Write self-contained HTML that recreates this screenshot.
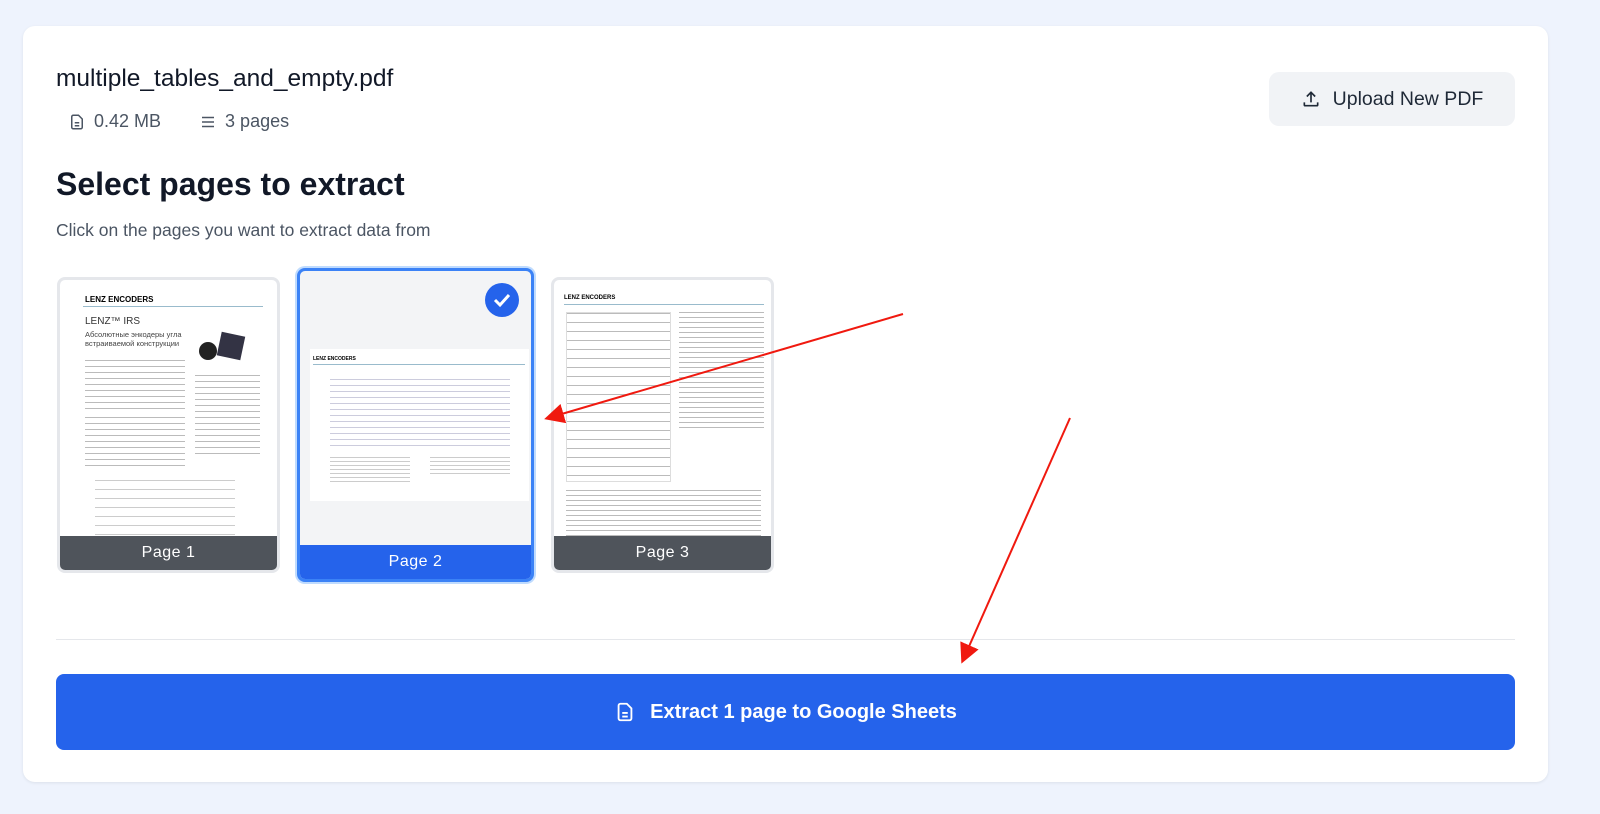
<!DOCTYPE html>
<html><head><meta charset="utf-8"><style>
*{box-sizing:border-box;margin:0;padding:0}
body{width:1600px;height:814px;background:#eef3fd;font-family:"Liberation Sans","Noto Sans CJK SC",sans-serif;position:relative;overflow:hidden}
.card{position:absolute;left:23px;top:26px;width:1525px;height:756px;background:#fff;border-radius:12px;box-shadow:0 1px 3px rgba(0,0,0,.08)}
.abs{position:absolute}
.t{position:absolute;background:#fff;border-radius:8px;overflow:hidden}
.line{position:absolute;height:2px;background:#c9ccd2}
.lbl{position:absolute;left:0;right:0;bottom:0;height:34px;color:#fff;font-size:16px;display:flex;align-items:center;justify-content:center;letter-spacing:.5px}
</style></head><body>
<div class="card">
 <div class="abs" style="left:33px;top:39px;font-size:24.5px;color:#111827">multiple_tables_and_empty.pdf</div>
 <div class="abs" style="left:45px;top:85px;font-size:18px;color:#4b5563;display:flex;align-items:center;gap:8px">
  <svg width="18" height="18" viewBox="0 0 24 24" fill="none" stroke="#4b5563" stroke-width="2"><path d="M14 3H7a2 2 0 0 0-2 2v14a2 2 0 0 0 2 2h10a2 2 0 0 0 2-2V8z"/><path d="M9 13h6M9 17h6"/></svg>0.42 MB
  <svg style="margin-left:30px" width="18" height="18" viewBox="0 0 24 24" fill="none" stroke="#4b5563" stroke-width="2"><path d="M4 6h16M4 12h16M4 18h16"/></svg>3 pages</div>
 <div class="abs" style="left:1246px;top:46px;width:246px;height:54px;background:#f1f3f6;border-radius:10px;display:flex;align-items:center;justify-content:center;gap:12px;font-size:19.5px;color:#1f2937">
  <svg width="20" height="20" viewBox="0 0 24 24" fill="none" stroke="#1f2937" stroke-width="2"><path d="M4 16v3a1 1 0 0 0 1 1h14a1 1 0 0 0 1-1v-3M12 4v12M7 9l5-5 5 5"/></svg>Upload New PDF</div>
 <div class="abs" style="left:33px;top:140px;font-size:32px;font-weight:bold;color:#111827">Select pages to extract</div>
 <div class="abs" style="left:33px;top:194px;font-size:17.5px;color:#4b5563">Click on the pages you want to extract data from</div>

 <!-- page1 -->
 <div class="t" style="left:34px;top:251px;width:223px;height:296px;border:3px solid #e5e7eb">
  <div class="abs" style="left:12px;top:4px;width:196px;height:290px;background:#fff">
   <div class="abs" style="left:13px;top:11px;font-size:8px;font-weight:bold">LENZ ENCODERS</div>
   <div class="abs" style="left:11px;top:22px;width:180px;height:1px;background:#9bc"></div>
   <div class="abs" style="left:13px;top:32px;font-size:10px;color:#333">LENZ™ IRS</div>
   <div class="abs" style="left:13px;top:46px;font-size:7.5px;color:#444;width:100px">Абсолютные энкодеры угла встраиваемой конструкции</div>
   <div class="abs" style="left:127px;top:48px;width:45px;height:32px;"><div class="abs" style="left:0;top:10px;width:18px;height:18px;border-radius:50%;background:#222"></div><div class="abs" style="left:20px;top:2px;width:24px;height:24px;background:#334;transform:rotate(12deg)"></div></div>
  </div>
  <div class="line" style="left:25px;top:80px;width:100px;height:50px;background:repeating-linear-gradient(#bbb 0 1px,#fff 1px 6px)"></div>
  <div class="line" style="left:25px;top:137px;width:100px;height:50px;background:repeating-linear-gradient(#bbb 0 1px,#fff 1px 6px)"></div>
  <div class="line" style="left:135px;top:95px;width:65px;height:80px;background:repeating-linear-gradient(#bbb 0 1px,#fff 1px 6px)"></div>
  <div class="line" style="left:35px;top:200px;width:140px;height:60px;background:repeating-linear-gradient(#ccc 0 1px,#fff 1px 9px)"></div>
  <div class="lbl" style="background:rgba(55,60,68,.88)">Page 1</div>
 </div>
 <!-- page2 -->
 <div class="t" style="left:274px;top:242px;width:237px;height:314px;border:3px solid #3b82f6;box-shadow:0 0 0 2px #bfdbfe;background:#f3f4f6">
  <div class="abs" style="left:10px;top:78px;width:219px;height:152px;background:#fff">
   <div class="abs" style="left:3px;top:7px;font-size:5px;font-weight:bold">LENZ ENCODERS</div>
   <div class="abs" style="left:3px;top:15px;width:212px;height:1px;background:#9bc"></div>
   <div class="abs" style="left:20px;top:30px;width:180px;height:70px;background:repeating-linear-gradient(#ccd 0 1px,#fff 1px 6px)"></div>
   <div class="abs" style="left:20px;top:108px;width:80px;height:25px;background:repeating-linear-gradient(#ccc 0 1px,#fff 1px 4px)"></div>
   <div class="abs" style="left:120px;top:108px;width:80px;height:20px;background:repeating-linear-gradient(#ccc 0 1px,#fff 1px 4px)"></div>
  </div>
  <div class="abs" style="right:12px;top:12px;width:34px;height:34px;border-radius:50%;background:#2563eb"><svg width="34" height="34" viewBox="0 0 34 34"><path d="M10 17l5 5 9-10" fill="none" stroke="#fff" stroke-width="3"/></svg></div>
  <div class="lbl" style="background:#2563eb">Page 2</div>
 </div>
 <!-- page3 -->
 <div class="t" style="left:528px;top:251px;width:223px;height:296px;border:3px solid #e5e7eb">
  <div class="abs" style="left:10px;top:15px;font-size:6px;font-weight:bold">LENZ ENCODERS</div>
  <div class="abs" style="left:10px;top:24px;width:200px;height:1px;background:#9bc"></div>
  <div class="abs" style="left:12px;top:32px;width:105px;height:170px;background:repeating-linear-gradient(#bbb 0 1px,#fff 1px 9px);border:1px solid #ddd"></div>
  <div class="abs" style="left:125px;top:32px;width:85px;height:120px;background:repeating-linear-gradient(#bbb 0 1px,#fff 1px 5px)"></div>
  <div class="abs" style="left:12px;top:210px;width:195px;height:48px;background:repeating-linear-gradient(#bbb 0 1px,#fff 1px 5px)"></div>
  <div class="lbl" style="background:rgba(55,60,68,.88)">Page 3</div>
 </div>

 <div class="abs" style="left:33px;top:613px;width:1459px;height:1px;background:#e5e7eb"></div>
 <div class="abs" style="left:33px;top:648px;width:1459px;height:76px;background:#2563eb;border-radius:8px;display:flex;align-items:center;justify-content:center;gap:14px;color:#fff;font-size:20px;font-weight:bold">
  <svg width="22" height="22" viewBox="0 0 24 24" fill="none" stroke="#fff" stroke-width="2"><path d="M14 3H7a2 2 0 0 0-2 2v14a2 2 0 0 0 2 2h10a2 2 0 0 0 2-2V8z"/><path d="M9 13h6M9 17h6"/></svg>Extract 1 page to Google Sheets</div>
</div>
<svg class="abs" style="left:0;top:0" width="1600" height="814">
 <defs><marker id="a" markerWidth="10" markerHeight="10" refX="8" refY="5" orient="auto"><path d="M0 0L10 5L0 10z" fill="#f0190f"/></marker></defs>
 <path d="M903 314L548 418" stroke="#f0190f" stroke-width="2" marker-end="url(#a)"/>
 <path d="M1070 418L963 660" stroke="#f0190f" stroke-width="2" marker-end="url(#a)"/>
</svg>
</body></html>
